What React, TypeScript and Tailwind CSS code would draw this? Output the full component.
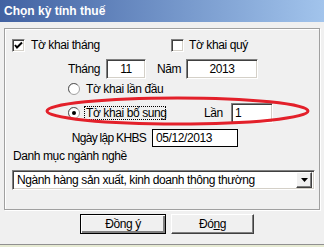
const sunken =
  "border border-t-[#808080] border-l-[#808080] border-r-white border-b-white shadow-[inset_1px_1px_0_#404040,inset_-1px_-1px_0_#d4d0c8] bg-white"

function CheckBox({ checked }: { checked?: boolean }) {
  return (
    <span className={`w-[13px] h-[13px] shrink-0 flex items-center justify-center ${sunken}`}>
      {checked && (
        <svg width="9" height="9" viewBox="0 0 9 9">
          <path d="M1 4 L3 6.5 L8 1.5" fill="none" stroke="#000" strokeWidth="2" />
        </svg>
      )}
    </span>
  )
}

function Radio({ checked }: { checked?: boolean }) {
  return (
    <svg width="12" height="12" viewBox="0 0 12 12" className="shrink-0">
      <circle cx="6" cy="6" r="5.5" fill="#fff" stroke="#a0a0a0" />
      <path d="M2 9.5 A5 5 0 0 1 9.5 2" fill="none" stroke="#606060" strokeWidth="1" />
      {checked && <circle cx="6" cy="6" r="2" fill="#000" />}
    </svg>
  )
}

export default function App() {
  return (
    <div className="relative w-[324px] h-[247px] bg-[#f0f0f0] overflow-hidden flex flex-col whitespace-nowrap font-['Liberation_Sans',Arial,sans-serif] text-[12px] tracking-[-0.4px] text-black">
      {/* thanh tiêu đề */}
      <div className="h-[22px] shrink-0 flex items-center pl-[4px] bg-gradient-to-r from-[#4262a2] to-[#a2c4ec] text-white font-bold tracking-normal text-[12px]">
        Chọn kỳ tính thuế
      </div>

      <div className="px-[4px] pt-[6px]">
        {/* group box */}
        <div className="h-[182px] border border-[#a0a0a0] shadow-[inset_1px_1px_0_#fff,1px_1px_0_#fff] flex flex-col">
          <div className="h-[16px] mt-[8px] flex items-center">
            <span className="ml-[7px]"><CheckBox checked /></span>
            <span className="ml-[6px] w-[140px] shrink-0">Tờ khai tháng</span>
            <CheckBox />
            <span className="ml-[5px]">Tờ khai quý</span>
          </div>

          <div className="h-[20px] mt-[6px] flex items-center">
            <span className="ml-[63px] w-[38px] shrink-0">Tháng</span>
            <div className={`w-[40px] h-[20px] shrink-0 flex items-center justify-center ${sunken}`}>11</div>
            <span className="ml-[11px] w-[29px] shrink-0">Năm</span>
            <div className={`w-[72px] h-[20px] shrink-0 flex items-center justify-center ${sunken}`}>2013</div>
          </div>

          <div className="h-[16px] mt-[2px] flex items-center">
            <span className="ml-[63px]"><Radio /></span>
            <span className="ml-[6px]">Tờ khai lần đầu</span>
          </div>

          <div className="h-[20px] mt-[6px] flex items-center">
            <span className="ml-[63px]"><Radio checked /></span>
            <span className="ml-[4px] w-[82px] shrink-0 h-[14px] flex items-center pl-[1px] border border-dotted border-black">
              Tờ khai bổ sung
            </span>
            <span className="ml-[38px] w-[27px] shrink-0">Lần</span>
            <div className={`w-[42px] h-[20px] shrink-0 flex items-center pl-[3px] ${sunken}`}>1</div>
          </div>

          <div className="h-[18px] mt-[6px] flex items-center">
            <span className="w-[141px] shrink-0 text-right tracking-[-0.7px]">Ngày lập KHBS</span>
            <div className="ml-[6px] w-[86px] h-[18px] shrink-0 flex items-center pl-[3px] bg-white border border-black">05/12/2013</div>
          </div>

          <div className="h-[14px] mt-[2px] flex items-center pl-[8px]">Danh mục ngành nghề</div>

          <div className={`mt-[7px] ml-[7px] w-[303px] h-[20px] flex items-center ${sunken}`}>
            <span className="flex-1 pl-[4px]">Ngành hàng sản xuất, kinh doanh thông thường</span>
            <span className="w-[16px] h-[16px] mr-[2px] flex items-center justify-center bg-[#f0f0f0] border border-t-white border-l-white border-r-[#404040] border-b-[#404040] shadow-[inset_-1px_-1px_0_#808080]">
              <svg width="7" height="4" viewBox="0 0 7 4">
                <path d="M0 0 H7 L3.5 4 Z" fill="#000" />
              </svg>
            </span>
          </div>
        </div>
      </div>

      {/* nút bấm */}
      <div className="mt-[4px] flex pl-[80px] gap-[5px]">
        <button className="w-[86px] h-[20px] border border-black bg-[#f0f0f0] shadow-[inset_1px_1px_0_#fff,inset_-2px_-2px_0_#808080] flex items-center justify-center">
          <span>Đồn<u>g</u>{"\u00a0"}ý</span>
        </button>
        <button className="w-[83px] h-[20px] border border-t-white border-l-white border-r-[#404040] border-b-[#404040] bg-[#f0f0f0] shadow-[inset_-1px_-1px_0_#808080] flex items-center justify-center">
          <span>Đó<u>n</u>g</span>
        </button>
      </div>

      <div className="mt-auto h-[1px] bg-[#909090]" />
      <div className="h-[2px] bg-[#e6ead2]" />

      {/* vòng đỏ khoanh */}
      <svg className="absolute left-[44px] top-[95px] pointer-events-none" width="268" height="32" viewBox="0 0 268 32">
        <ellipse cx="133.5" cy="16" rx="130.5" ry="13" fill="none" stroke="#e3202a" strokeWidth="3" />
      </svg>
    </div>
  )
}
